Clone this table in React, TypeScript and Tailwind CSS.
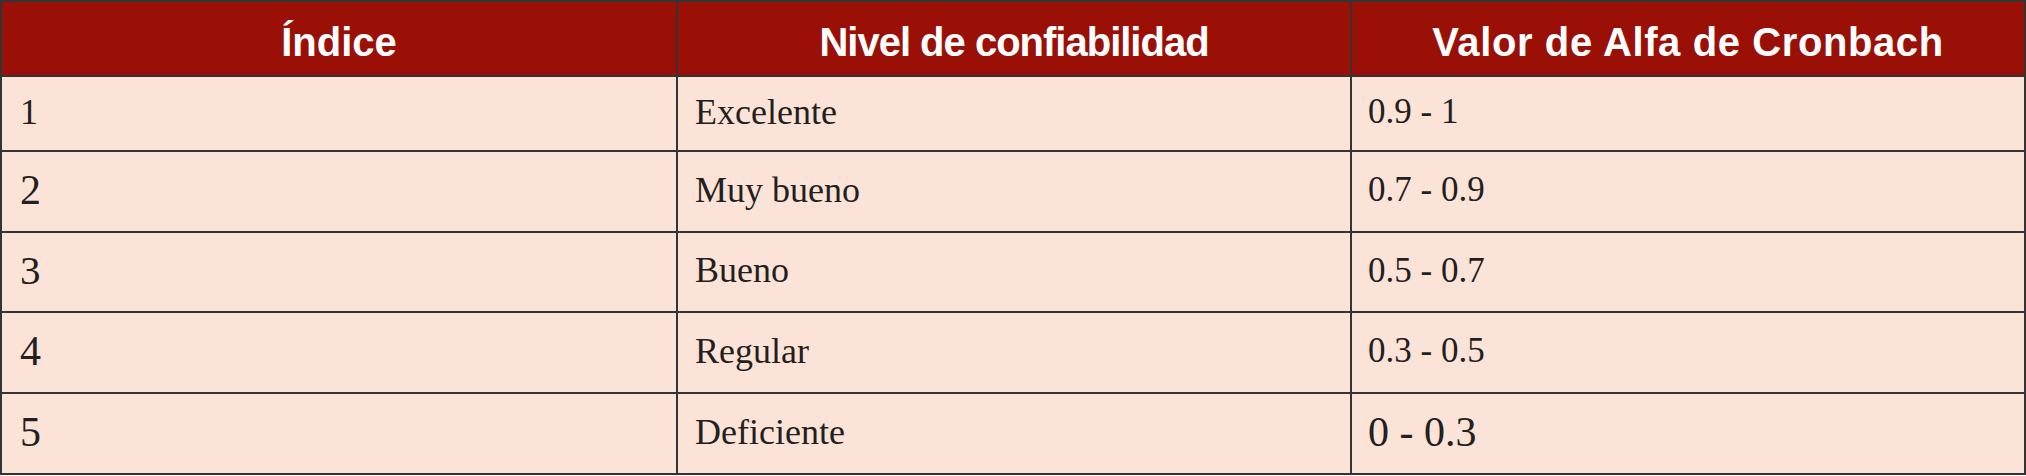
const rows = [
  { idx: "1", idxSize: "text-[36px]", nivel: "Excelente", valor: "0.9 - 1", valorSize: "text-[35px]", h: "h-[75px]" },
  { idx: "2", idxSize: "text-[42px]", nivel: "Muy bueno", valor: "0.7 - 0.9", valorSize: "text-[35px]", h: "h-[81px]" },
  { idx: "3", idxSize: "text-[41px]", nivel: "Bueno", valor: "0.5 - 0.7", valorSize: "text-[35px]", h: "h-[80px]" },
  { idx: "4", idxSize: "text-[42px]", nivel: "Regular", valor: "0.3 - 0.5", valorSize: "text-[35px]", h: "h-[81px]" },
  { idx: "5", idxSize: "text-[42px]", nivel: "Deficiente", valor: "0 - 0.3", valorSize: "text-[42px]", h: "h-[81px]" },
];

export default function App() {
  return (
    <div className="w-[2026px] bg-white">
      <div className="border-2 border-[#333333] bg-[#fce3d8] text-[#231f20] font-['Liberation_Serif',serif]">
        {/* Header */}
        <div className="grid grid-cols-3 h-[73px] bg-[#9b1006] text-white font-['Liberation_Sans',Arial,sans-serif] font-bold leading-none">
          <div className="flex items-center justify-center pt-[6px] text-[40px]">Índice</div>
          <div className="flex items-center justify-center pt-[6px] text-[40px] tracking-[-1px] border-l-2 border-[#333333]">
            Nivel de confiabilidad
          </div>
          <div className="flex items-center justify-center pt-[6px] text-[40px] tracking-[0.6px] border-l-2 border-[#333333]">
            Valor de Alfa de Cronbach
          </div>
        </div>

        {/* Body rows */}
        {rows.map((r) => (
          <div key={r.idx} className={`grid grid-cols-3 border-t-2 border-[#333333] leading-none ${r.h}`}>
            <div className={`flex items-center pl-[18px] pb-[4px] ${r.idxSize}`}>{r.idx}</div>
            <div className="flex items-center pl-[17px] pb-[4px] text-[36px] border-l-2 border-[#333333]">{r.nivel}</div>
            <div className={`flex items-center pl-[16px] pb-[4px] border-l-2 border-[#333333] ${r.valorSize}`}>{r.valor}</div>
          </div>
        ))}
      </div>
    </div>
  );
}
